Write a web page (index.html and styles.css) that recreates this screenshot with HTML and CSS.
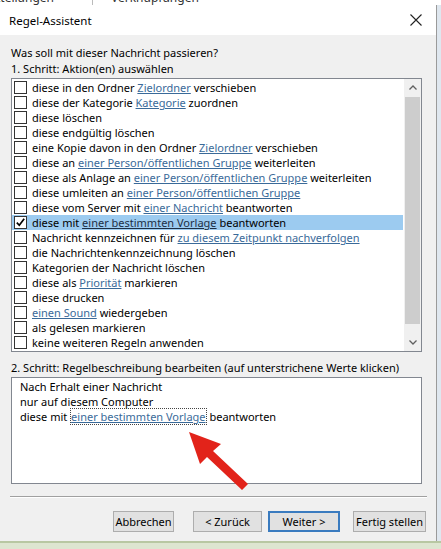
FILE: index.html
```html
<!DOCTYPE html>
<html lang="de">
<head>
<meta charset="utf-8">
<title>Regel-Assistent</title>
<link rel="stylesheet" href="styles.css">
</head>
<body>
<div class="screen">
  <div class="behind">
    <span class="b1">Mitteilungen</span><span class="bsep"></span><span class="b2">Verknüpfungen</span>
  </div>
  <div class="mainrow">
    <div class="dialog">
      <div class="titlebar">
        <span class="title">Regel-Assistent</span>
        <svg class="close" width="12" height="12" viewBox="0 0 12 12"><path d="M0.5 0.5 L11.5 11.5 M11.5 0.5 L0.5 11.5" stroke="#222" stroke-width="1.1" fill="none"/></svg>
      </div>
      <div class="body">
        <div class="label">Was soll mit dieser Nachricht passieren?</div>
        <div class="label">1. Schritt: Aktion(en) auswählen</div>
        <div class="listbox">
          <div class="items">
            <div class="item"><span class="cb"></span><span>diese in den Ordner <span class="lnk">Zielordner</span> verschieben</span></div>
            <div class="item"><span class="cb"></span><span>diese der Kategorie <span class="lnk">Kategorie</span> zuordnen</span></div>
            <div class="item"><span class="cb"></span><span>diese löschen</span></div>
            <div class="item"><span class="cb"></span><span>diese endgültig löschen</span></div>
            <div class="item"><span class="cb"></span><span>eine Kopie davon in den Ordner <span class="lnk">Zielordner</span> verschieben</span></div>
            <div class="item"><span class="cb"></span><span>diese an <span class="lnk">einer Person/öffentlichen Gruppe</span> weiterleiten</span></div>
            <div class="item"><span class="cb"></span><span>diese als Anlage an <span class="lnk">einer Person/öffentlichen Gruppe</span> weiterleiten</span></div>
            <div class="item"><span class="cb"></span><span>diese umleiten an <span class="lnk">einer Person/öffentlichen Gruppe</span></span></div>
            <div class="item"><span class="cb"></span><span>diese vom Server mit <span class="lnk">einer Nachricht</span> beantworten</span></div>
            <div class="item selected"><span class="cb checked"><svg width="11" height="11" viewBox="0 0 11 11"><path d="M1.8 5.6 L4.3 8.3 L9.2 1.8" stroke="#000" stroke-width="1.7" fill="none"/></svg></span><span>diese mit <span class="lnk">einer bestimmten Vorlage</span> beantworten</span></div>
            <div class="item"><span class="cb"></span><span>Nachricht kennzeichnen für <span class="lnk">zu diesem Zeitpunkt nachverfolgen</span></span></div>
            <div class="item"><span class="cb"></span><span>die Nachrichtenkennzeichnung löschen</span></div>
            <div class="item"><span class="cb"></span><span>Kategorien der Nachricht löschen</span></div>
            <div class="item"><span class="cb"></span><span>diese als <span class="lnk">Priorität</span> markieren</span></div>
            <div class="item"><span class="cb"></span><span>diese drucken</span></div>
            <div class="item"><span class="cb"></span><span><span class="lnk">einen Sound</span> wiedergeben</span></div>
            <div class="item"><span class="cb"></span><span>als gelesen markieren</span></div>
            <div class="item"><span class="cb"></span><span>keine weiteren Regeln anwenden</span></div>
          </div>
          <div class="scrollbar">
            <div class="sbbtn"><svg width="8" height="5" viewBox="0 0 8 5"><path d="M0.5 4.5 L4 1 L7.5 4.5" stroke="#606060" stroke-width="1.3" fill="none"/></svg></div>
            <div class="track"><div class="thumb"></div></div>
            <div class="sbbtn"><svg width="8" height="5" viewBox="0 0 8 5"><path d="M0.5 0.5 L4 4 L7.5 0.5" stroke="#606060" stroke-width="1.3" fill="none"/></svg></div>
          </div>
        </div>
        <div class="label step2">2. Schritt: Regelbeschreibung bearbeiten (auf unterstrichene Werte klicken)</div>
        <div class="desc">
          <div class="dline">Nach Erhalt einer Nachricht</div>
          <div class="dline">nur auf diesem Computer</div>
          <div class="dline">diese mit <span class="lnk focus">einer bestimmten Vorlage</span> beantworten</div>
        </div>
        <div class="sep"></div>
        <div class="buttons">
          <button class="btn b-cancel">Abbrechen</button>
          <button class="btn b-back">&lt; Zurück</button>
          <button class="btn b-next default">Weiter &gt;</button>
          <button class="btn b-finish">Fertig stellen</button>
        </div>
      </div>
    </div>
    <div class="side"></div>
  </div>
  <div class="bottom"></div>
  <svg class="arrow" width="441" height="549" viewBox="0 0 441 549">
    <polygon points="189,432 221,444 213,451 248,484 242,490 207,457 200,464" fill="#e2231a"/>
  </svg>
</div>
</body>
</html>
```

FILE: styles.css
```css
* { box-sizing: border-box; }
html, body { margin: 0; padding: 0; }
body {
  width: 441px;
  height: 549px;
  overflow: hidden;
  font-family: "Noto Sans", "DejaVu Sans", sans-serif;
  font-size: 11px;
  color: #000;
  background: #fff;
}
.screen {
  position: relative;
  width: 441px;
  height: 549px;
  display: flex;
  flex-direction: column;
}
.behind {
  height: 5px;
  overflow: hidden;
  background: #fff;
  display: flex;
  align-items: flex-start;
  color: #333;
  font-size: 12px;
  line-height: 14px;
}
.behind .b1 { margin-top: -9px; margin-left: -18px; width: 110px; }
.behind .bsep { width: 1px; height: 5px; background: #bbb; }
.behind .b2 { margin-top: -9px; margin-left: 18px; }
.mainrow {
  display: flex;
  height: 536px;
}
.dialog {
  width: 437px;
  display: flex;
  flex-direction: column;
  background: #f0f0f0;
  border-right: 1px solid #9a9a9a;
}
.side {
  width: 4px;
  background: #dfe7ef;
}
.titlebar {
  height: 30px;
  background: #fff;
  display: flex;
  align-items: center;
  justify-content: space-between;
  padding: 0 8px 0 9px;
}
.title { font-size: 11.5px; color: #000; }
.close { margin-right: 6px; }
.body {
  flex: 1;
  padding: 10px 0 0 11px;
}
.label {
  line-height: 16px;
  height: 16px;
  white-space: nowrap;
}
.listbox {
  margin-top: 1px;
  width: 411px;
  height: 274px;
  border: 1px solid #828790;
  background: #fff;
  display: flex;
}
.items {
  flex: 1;
  padding: 1px 1px 0 0;
}
.item {
  height: 15px;
  line-height: 15px;
  display: flex;
  align-items: center;
  gap: 5px;
  padding-left: 2px;
  white-space: nowrap;
}
.item.selected { background: #9ccbf0; }
.cb {
  width: 13px;
  height: 13px;
  border: 1px solid #333;
  background: #fff;
  flex: none;
  display: flex;
  align-items: center;
  justify-content: center;
}
.lnk {
  color: #3a6a99;
  text-decoration: underline;
}
.selected .lnk { color: #1c2f45; }
.scrollbar {
  width: 17px;
  background: #f0f0f0;
  display: flex;
  flex-direction: column;
}
.sbbtn {
  height: 17px;
  display: flex;
  align-items: center;
  justify-content: center;
}
.track {
  flex: 1;
  padding: 1px 1px 10px 1px;
  display: flex;
}
.thumb {
  flex: 1;
  background: #cdcdcd;
}
.step2 { margin-top: 8px; }
.desc {
  margin-top: 1px;
  width: 411px;
  height: 107px;
  border: 1px solid #828790;
  background: #fff;
  padding: 1px 8px 0 8px;
}
.dline {
  height: 15px;
  line-height: 15px;
  white-space: nowrap;
}
.focus {
  outline: 1px dotted #444;
  outline-offset: 0;
  margin: 0 1px;
}
.sep {
  margin-top: 12px;
  margin-left: -1px;
  width: 417px;
  border-top: 1px solid #a0a0a0;
  border-bottom: 1px solid #fff;
}
.buttons {
  display: flex;
  margin-top: 13px;
  margin-left: 102px;
}
.btn {
  height: 21px;
  font-family: inherit;
  font-size: 11px;
  color: #000;
  background: #e1e1e1;
  border: 1px solid #adadad;
  padding: 0;
  line-height: 19px;
  white-space: nowrap;
}
.b-cancel { width: 61px; }
.b-back { width: 69px; margin-left: 19px; }
.b-next { width: 72px; margin-left: 6px; }
.b-finish { width: 73px; margin-left: 13px; }
.btn.default {
  border: 2px solid #3a7bbf;
  line-height: 17px;
}
.bottom {
  height: 8px;
  background: #dde5d0;
  border-top: 2px solid #b8c7a2;
}
.arrow {
  position: absolute;
  left: 0;
  top: 0;
  pointer-events: none;
}
```
